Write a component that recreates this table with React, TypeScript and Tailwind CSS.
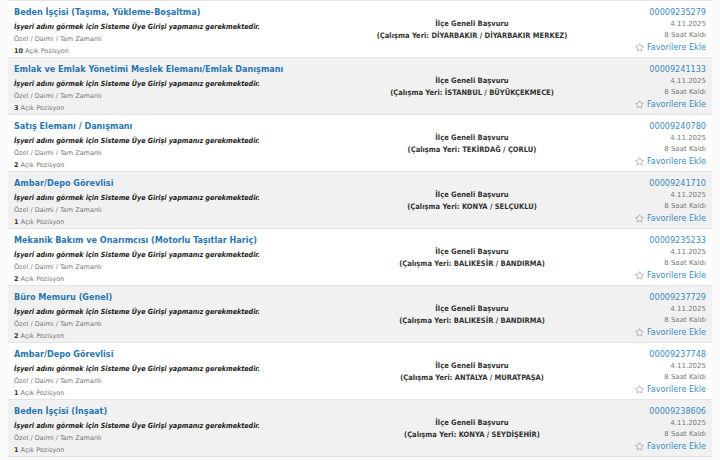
import React from "react";
import { Star } from "lucide-react";

type Job = {
  title: string;
  count: number;
  place: string;
  no: string;
};

const jobs: Job[] = [
  { title: "Beden İşçisi (Taşıma, Yükleme-Boşaltma)", count: 10, place: "DİYARBAKIR / DİYARBAKIR MERKEZ", no: "00009235279" },
  { title: "Emlak ve Emlak Yönetimi Meslek Elemanı/Emlak Danışmanı", count: 3, place: "İSTANBUL / BÜYÜKÇEKMECE", no: "00009241133" },
  { title: "Satış Elemanı / Danışmanı", count: 2, place: "TEKİRDAĞ / ÇORLU", no: "00009240780" },
  { title: "Ambar/Depo Görevlisi", count: 1, place: "KONYA / SELÇUKLU", no: "00009241710" },
  { title: "Mekanik Bakım ve Onarımcısı (Motorlu Taşıtlar Hariç)", count: 2, place: "BALIKESİR / BANDIRMA", no: "00009235233" },
  { title: "Büro Memuru (Genel)", count: 2, place: "BALIKESİR / BANDIRMA", no: "00009237729" },
  { title: "Ambar/Depo Görevlisi", count: 1, place: "ANTALYA / MURATPAŞA", no: "00009237748" },
  { title: "Beden İşçisi (İnşaat)", count: 1, place: "KONYA / SEYDİŞEHİR", no: "00009238606" },
];

const cond = "font-['DejaVu_Sans_Condensed','DejaVu_Sans',sans-serif] [font-stretch:condensed]";

const JobRow: React.FC<{ job: Job; odd: boolean }> = ({ job, odd }) => (
  <div
    className={`grid grid-cols-[332px_264px_1fr] h-[57px] border-b border-[#e4e4e4] ${
      odd ? "bg-[#f1f1f1]" : "bg-white"
    }`}
  >
    {/* Left: title + info */}
    <div className="pl-[6px] pt-[4px] flex flex-col">
      <a className={`${cond} text-[9px] leading-[14px] font-bold text-[#2a76b0] whitespace-nowrap`}>{job.title}</a>
      <div className={`${cond} text-[7.1px] leading-[15px] font-bold italic text-[#1a1a1a] whitespace-nowrap`}>
        İşyeri adını görmek için Sisteme Üye Girişi yapmanız gerekmektedir.
      </div>
      <div className="text-[6.5px] leading-[11px] text-[#777]">Özel / Daimi / Tam Zamanlı</div>
      <div className="text-[6.5px] leading-[12px] text-[#777]">
        <span className="font-bold text-[#333]">{job.count}</span> Açık Pozisyon
      </div>
    </div>

    {/* Middle: location */}
    <div className={`${cond} pt-[2px] flex flex-col items-center justify-center text-[7.5px] leading-[12px] font-bold text-[#333]`}>
      <div>İlçe Geneli Başvuru</div>
      <div className="whitespace-nowrap">(Çalışma Yeri: {job.place})</div>
    </div>

    {/* Right: number, date, favourite */}
    <div className="pr-[6px] pt-[4px] flex flex-col items-end">
      <a className={`${cond} text-[9px] leading-[14px] text-[#3a8bc2]`}>{job.no}</a>
      <div className="text-[7px] leading-[11px] text-[#777]">4.11.2025</div>
      <div className="text-[7px] leading-[11px] text-[#777]">8 Saat Kaldı</div>
      <a className={`${cond} flex items-center gap-[3px] text-[9px] leading-[13px] text-[#3a8bc2]`}>
        <Star size={9} strokeWidth={1.6} className="text-[#888]" />
        Favorilere Ekle
      </a>
    </div>
  </div>
);

export default function App() {
  return (
    <div className="w-[720px] h-[460px] overflow-hidden bg-[#fafafa] font-['DejaVu_Sans',Verdana,sans-serif]">
      <div className="mx-[8px] border-t border-[#e4e4e4]">
        {jobs.map((job, i) => (
          <JobRow key={job.no} job={job} odd={i % 2 === 1} />
        ))}
      </div>
    </div>
  );
}
